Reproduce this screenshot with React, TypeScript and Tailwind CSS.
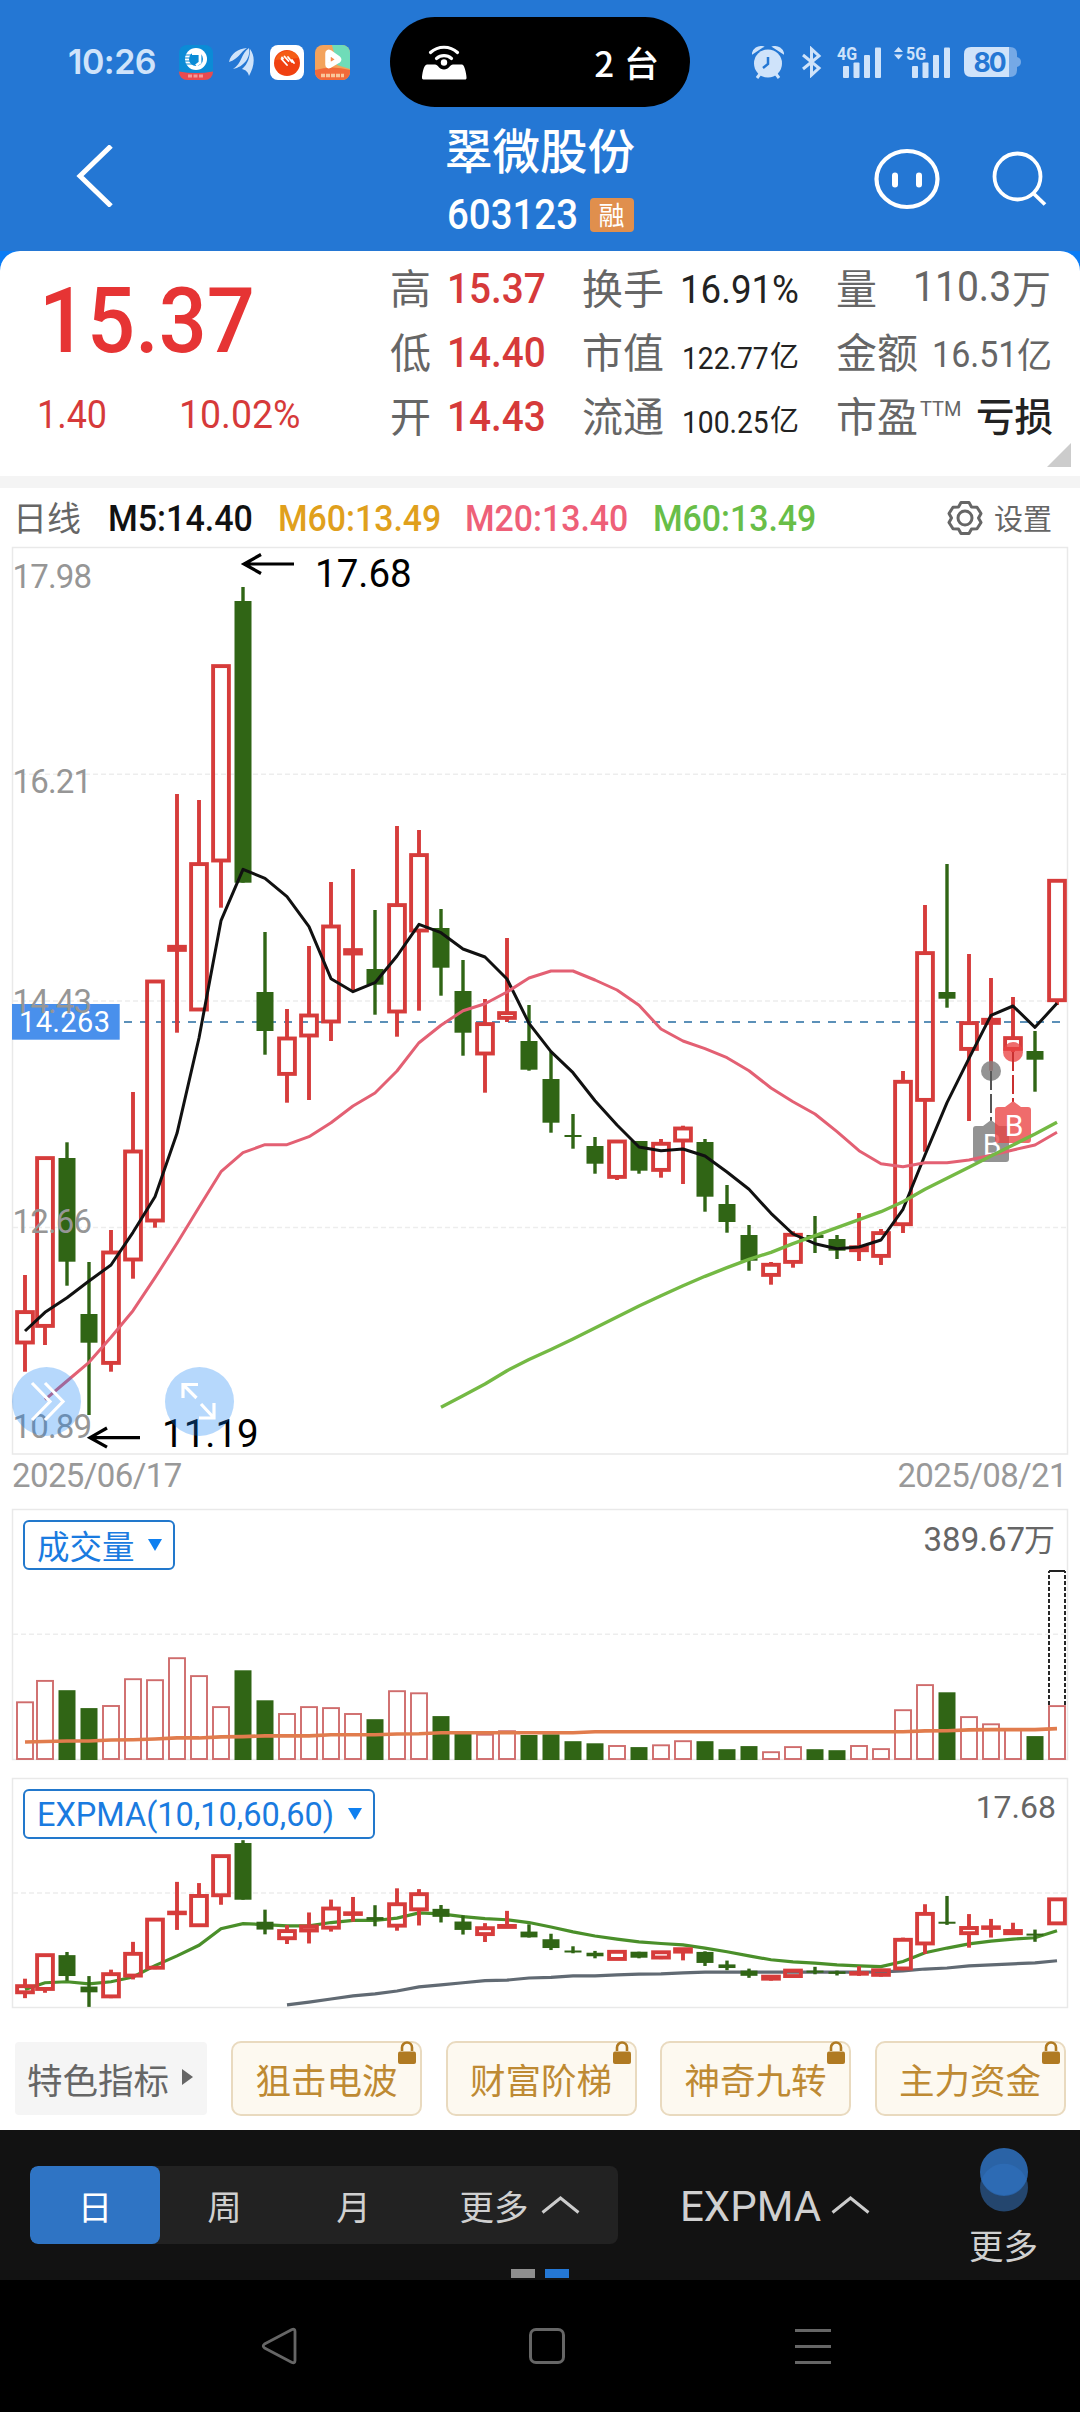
import type { ReactNode } from 'react';
import clsx from 'clsx';

type Candle = {
  up: boolean;
  high: number;
  top: number;
  bottom: number;
  low: number;
  vol: number;
};

// [up, high, body top, body bottom, low, volume height] in chart pixels
const RAW: [number, number, number, number, number, number][] = [
  [1, 1275, 1310.3, 1344.3, 1371.7, 58.2],
  [1, 1158, 1156.3, 1327.7, 1345, 79.6],
  [0, 1142.3, 1158, 1261.7, 1285.7, 69.3],
  [0, 1262, 1314, 1342.7, 1415, 51.4],
  [1, 1230, 1250.7, 1364.7, 1371.7, 54.5],
  [1, 1092, 1149.7, 1261.3, 1278.7, 81.3],
  [1, 981, 979.7, 1222.3, 1227.7, 80.3],
  [1, 794, 945, 951.7, 1032.7, 102.3],
  [1, 800, 862.3, 1011.3, 1010, 84.4],
  [1, 666, 664.3, 862.3, 907.7, 53.4],
  [0, 587, 601, 882.7, 882.7, 89.2],
  [0, 932, 992, 1031, 1054.7, 59.2],
  [1, 1009, 1036.7, 1075.7, 1102.7, 46.5],
  [1, 946, 1013.7, 1037.3, 1100, 53.4],
  [1, 882, 924.7, 1023.3, 1041, 52.4],
  [1, 869, 948.3, 955.3, 991.7, 46.5],
  [0, 910, 969, 984.7, 1014.7, 40.3],
  [1, 826, 903.3, 1013.3, 1036.7, 69.3],
  [1, 830, 853.3, 932.3, 1010.7, 67.2],
  [0, 909, 928, 967.7, 995.7, 43.4],
  [0, 960, 991, 1032.7, 1055.7, 27.9],
  [1, 999, 1022.3, 1055.3, 1092.7, 25.8],
  [1, 938, 1011.3, 1019.7, 1022, 29.3],
  [0, 1005, 1041, 1069.7, 1070.7, 24.5],
  [0, 1051.7, 1079, 1122.7, 1132.7, 25.2],
  [0, 1114, 1135, 1137, 1148.7, 18.3],
  [0, 1137, 1146, 1163.7, 1173.7, 16.2],
  [1, 1141, 1139.7, 1178.7, 1180, 14.5],
  [0, 1141, 1141, 1170.7, 1173.7, 12.4],
  [1, 1139, 1142, 1171.7, 1177.7, 15.2],
  [1, 1125.7, 1126.7, 1142.3, 1184, 19.3],
  [0, 1139, 1142, 1196.7, 1211.7, 18.3],
  [0, 1185, 1204, 1222, 1232.7, 10.3],
  [0, 1225, 1235, 1260.7, 1270.7, 13.4],
  [1, 1262, 1263, 1276.7, 1284.7, 8.3],
  [1, 1231.3, 1233, 1263.7, 1267.7, 13.4],
  [0, 1216, 1235, 1238, 1253, 10.3],
  [0, 1235, 1239, 1250.7, 1259, 9.3],
  [1, 1213, 1245.5, 1252, 1261, 14.5],
  [1, 1229, 1231.3, 1257.7, 1265, 11.4],
  [1, 1071, 1080, 1226, 1233, 50.3],
  [1, 905, 951.3, 1101.7, 1151.7, 75.4],
  [0, 864, 992, 998.7, 1007.7, 67.2],
  [1, 954, 1021.3, 1050.7, 1121, 43.4],
  [1, 978, 1018, 1024.7, 1070.7, 36.2],
  [1, 997, 1036.3, 1050.7, 1052, 30.7],
  [0, 1031, 1051, 1059.7, 1091.7, 23.4],
  [1, 881, 879, 1002, 1005, 54.4],
];

const VOL_BASE = 1759.5;

const CANDLES: Candle[] = RAW.map(([up, high, top, bottom, low, vol]) => ({
  up: up === 1,
  high,
  top,
  bottom,
  low,
  vol: VOL_BASE - vol,
}));

const MA5 = [
  1331, 1312.3, 1297.7, 1281, 1265, 1232.3, 1196.7, 1133.3, 1038, 920.7, 869.3, 878.3, 896.7, 926.7, 978.7, 991.7,
  982.7, 956, 924.3, 932.7, 949, 957, 979, 1023.3, 1051.7, 1072.7, 1100.7, 1125, 1147, 1150.7, 1149, 1156, 1172,
  1189.3, 1213.3, 1234, 1243.7, 1248.7, 1247, 1240, 1209.3, 1155, 1102.7, 1058.3, 1015.3, 1006, 1027.3, 1003.3,
];

const MA20 = [
  1399.7, 1381, 1362.3, 1337.3, 1310.7, 1277.7, 1243.3, 1207.3, 1171.7, 1152.7, 1144.7, 1144.7, 1136.7, 1122.7, 1106,
  1093, 1071, 1042.7, 1025.3, 1010.7, 1003.7, 992, 978, 971, 971, 980, 990, 1005.3, 1029, 1041, 1048.7, 1057.7,
  1070.7, 1088, 1101.7, 1114, 1131.7, 1150.7, 1163.7, 1166.7, 1162.7, 1162.7, 1160, 1155.3, 1150, 1145, 1132.3,
];

const MA60 = [
  1407.3, 1395.7, 1384, 1370.7, 1359.5, 1349.5, 1339, 1328, 1317, 1306, 1295.7, 1285.7, 1276.3, 1267.7, 1259.3,
  1252.3, 1243.7, 1235.7, 1227.7, 1219.7, 1211.7, 1201.7, 1189.3, 1178.3, 1167.3, 1156, 1145, 1134, 1122.3,
];

// indicator lines, measured from y = 1500 before the pane stretch
const VOL_MA = [
  234.3, 233.7, 233.3, 233.3, 232.3, 232, 231.3, 230.3, 230.3, 229.3, 229, 228.3, 228.3, 228.3, 227.3, 227.3, 227.3,
  226.5, 226.3, 225.3, 225.3, 225.3, 225.3, 225.3, 225.3, 225.3, 224.3, 224.3, 224.3, 224.3, 224.3, 224.3, 224.3,
  224.3, 224.3, 224.3, 224.3, 224.3, 224.3, 224.3, 224.3, 223.5, 223.3, 222.5, 222.3, 222.3, 222.3, 221.3,
];

const EMA10 = [
  473.7, 467.3, 466.3, 468.3, 466.3, 461.7, 450.7, 441.3, 431, 415, 410, 411, 412.3, 412.3, 409, 407, 407, 404.7,
  399.7, 400.7, 403.3, 405.3, 406.3, 409, 413.3, 418, 422, 425, 427.7, 429.3, 430.7, 433.7, 437.3, 441.3, 445, 447,
  448.3, 450, 451, 451.7, 446.7, 438.3, 433.7, 429.7, 427, 425, 423.7, 417,
];

const EMA60 = [
  488.7, 486, 483, 480, 478, 475.3, 471.3, 469.3, 467.3, 465.3, 464.7, 462.7, 462, 460.7, 460.7, 459.7, 459, 458.7,
  457.7, 457, 457, 457, 457, 457, 457, 457, 457, 456.7, 455.7, 454, 453, 451, 450, 449, 448, 446,
];

const cx = (i: number) => (i === 0 ? 25 : 23 + 22 * i);

const linePoints = (values: number[], start = 0) => values.map((y, i) => `${cx(i + start)},${y}`).join(' ');

const paneY = (v: number) => 1500 + v * 1.0331;

// the indicator pane repeats the candles on a compressed price scale
const toSub = (y: number) => 1840.2 + (y - 587) * 0.2013;
const same = (y: number) => y;

function Candles({ scale }: { scale: (y: number) => number }) {
  return (
    <g>
      {CANDLES.map((c, i) => {
        const x = cx(i);
        if (!c.up) {
          const h = Math.max(scale(c.bottom) - scale(c.top), 2);
          return (
            <g key={i} fill="#306515">
              <rect x={x - 1.7} y={scale(c.high)} width={3.4} height={scale(c.low) - scale(c.high)} />
              <rect x={x - 8.5} y={scale(c.top)} width={17} height={h} />
            </g>
          );
        }
        const top = scale(c.top + 1.8);
        const bottom = scale(c.bottom - 1.8);
        return (
          <g key={i} stroke="#d63c3b" strokeWidth={3.9} fill="none">
            {c.high < c.top && <line x1={x} x2={x} y1={scale(c.high)} y2={top} />}
            {c.low > c.bottom && <line x1={x} x2={x} y1={bottom} y2={scale(c.low)} />}
            <rect x={x - 7.9} y={top} width={15.8} height={Math.max(bottom - top, 0.5)} />
          </g>
        );
      })}
    </g>
  );
}

function Grid({ y }: { y: number }) {
  return <line x1={13} x2={1067} y1={y} y2={y} stroke="#ededed" strokeWidth={1.5} strokeDasharray="5 3" />;
}

function Marker({ x, y, dotY, color, line }: { x: number; y: number; dotY: number; color: string; line: string }) {
  return (
    <g>
      <circle cx={x} cy={dotY} r={10} fill={color} />
      <line x1={x} x2={x} y1={dotY} y2={y} stroke={line} strokeWidth={2} strokeDasharray="19 4" />
      <path
        d={`M${x} ${y - 1}l8 6h7a3 3 0 0 1 3 3v30a3 3 0 0 1-3 3h-30a3 3 0 0 1-3-3v-30a3 3 0 0 1 3-3h7z`}
        fill={color}
      />
      <text x={x + 1} y={y + 34} textAnchor="middle" fontSize={30} fill="#fff">
        B
      </text>
    </g>
  );
}

const PRICE_LABELS: [string, number][] = [
  ['17.98', 587.7],
  ['16.21', 793],
  ['14.43', 1012.5],
  ['12.66', 1233],
  ['10.89', 1438],
];

function PriceChart() {
  return (
    <div className="relative h-[910px]">
      <svg className="block font-[Roboto,sans-serif]" width={1080} height={910} viewBox="0 546 1080 910">
        <rect x={12.5} y={547.5} width={1055} height={906.5} fill="#fff" stroke="#e9e9e9" strokeWidth={1.5} />
        <Grid y={774.3} />
        <Grid y={1001} />
        <Grid y={1227.5} />
        <line x1={124} x2={1062} y1={1022} y2={1022} stroke="#5b90b8" strokeWidth={2} strokeDasharray="8 8" />
        <Candles scale={same} />
        <polyline points={linePoints(MA5)} fill="none" stroke="#111" strokeWidth={3} strokeLinejoin="round" />
        <Marker x={991} y={1121} dotY={1071} color="rgba(128,128,128,0.85)" line="#555" />
        <Marker x={1013} y={1102} dotY={1052} color="rgba(235,66,66,0.78)" line="#c93030" />
        <g fill="none" strokeLinejoin="round">
          <polyline points={linePoints(MA20, 1)} stroke="#e36073" strokeWidth={3} />
          <polyline points={linePoints(MA60, 19)} stroke="#74b944" strokeWidth={3.4} />
        </g>
        <rect x={12} y={1004} width={107.7} height={35.7} fill="#4990ec" />
        <text x={19} y={1032} fontSize={29} textLength={91} fill="#fff">
          14.263
        </text>
        <g fill="#969696" fontSize={33}>
          {PRICE_LABELS.map(([label, y]) => (
            <text key={label} x={12.5} y={y} textLength={79.5}>
              {label}
            </text>
          ))}
        </g>
        <g stroke="#000" strokeWidth={3.2} fill="none">
          <path d="M294 564H244M261 554.5L244 564l17 9.5" />
          <path d="M140 1437.7H90M107 1428L90 1437.7l17 9.5" />
        </g>
        <g fontSize={38.5} fill="#000">
          <text x={315} y={587}>17.68</text>
          <text x={162} y={1446.7}>11.19</text>
        </g>
      </svg>
      <button className="absolute left-[12px] top-[821px] h-[69px] w-[69px] rounded-full bg-[#0c7df5]/30">
        <svg className="block" width={69} height={69} viewBox="0 0 69 69" fill="none" stroke="#fff" strokeWidth={3.2}>
          <path d="M20 16l18 18.5L20 53M33 16l18 18.5L33 53" />
        </svg>
      </button>
      <button className="absolute left-[165px] top-[821px] h-[69px] w-[69px] rounded-full bg-[#0c7df5]/30">
        <svg className="block" width={69} height={69} viewBox="0 0 69 69" fill="none" stroke="#fff" strokeWidth={3.2}>
          <path d="M18 31V17.500h15M18 17.500l13.500 13.500M49 36v15H34M49 51L36 37" />
        </svg>
      </button>
    </div>
  );
}

function PaneButton({ children, className }: { children: ReactNode; className?: string }) {
  return (
    <button
      className={clsx(
        'absolute left-[23px] flex h-[50px] items-center justify-between rounded-md border-2 border-[#2278cc] bg-white pl-3 pr-[11px] text-[#1a7be0]',
        className,
      )}
    >
      {children}
      <svg width={14} height={12} viewBox="0 0 14 12" fill="#0f80f0" className="-mt-px">
        <path d="M0 0h14L7 12z" />
      </svg>
    </button>
  );
}

function VolumeChart() {
  return (
    <div className="relative h-[268px]">
      <svg className="block" width={1080} height={254} viewBox="0 1508 1080 254">
        <rect x={12.5} y={1509.5} width={1055} height={250} fill="#fff" stroke="#e9e9e9" strokeWidth={1.5} />
        <Grid y={1634.3} />
        {CANDLES.map((c, i) =>
          c.up ? (
            <rect
              key={i}
              x={cx(i) - 8}
              y={c.vol + 1}
              width={16}
              height={VOL_BASE - c.vol - 1.5}
              fill="none"
              stroke="#cf6c6c"
              strokeWidth={1.9}
            />
          ) : (
            <rect key={i} x={cx(i) - 8.5} y={c.vol} width={17} height={VOL_BASE - c.vol + 0.5} fill="#306515" />
          ),
        )}
        <path d="M1049 1705V1571M1065 1705V1571" stroke="#111" strokeWidth={1.8} strokeDasharray="4 2" />
        <path d="M1049 1571H1065" stroke="#222" strokeWidth={2} />
        <polyline points={linePoints(VOL_MA.map(paneY))} fill="none" stroke="#e17c4d" strokeWidth={3.6} />
      </svg>
      <PaneButton className="top-[12px] w-[152px] text-[32.500px]">成交量</PaneButton>
      <span className="absolute right-[25px] top-[10px] flex h-[40px] items-center text-[33px] text-[#666]">
        <span className="pt-1 font-[Roboto,sans-serif]">389.67</span>
        <span className="-ml-px text-[31px]">万</span>
      </span>
    </div>
  );
}

function ExpmaChart() {
  return (
    <div className="relative h-[264px]">
      <svg className="block" width={1080} height={234} viewBox="0 1776 1080 234">
        <rect x={12.5} y={1778.5} width={1055} height={229} fill="#fff" stroke="#e9e9e9" strokeWidth={1.5} />
        <Grid y={1892.9} />
        <polyline points={linePoints(EMA10.map(paneY))} fill="none" stroke="#4a8f2a" strokeWidth={3.2} />
        <polyline points={linePoints(EMA60.map(paneY), 12)} fill="none" stroke="#616a73" strokeWidth={3.2} />
        <Candles scale={toSub} />
      </svg>
      <PaneButton className="top-[13px] w-[352px] font-[Roboto,sans-serif] text-[33px]">
        <span className="-mr-4 inline-block origin-left scale-x-[0.985] whitespace-nowrap pt-[2px]">
          EXPMA(10,10,60,60)
        </span>
      </PaneButton>
      <span className="absolute right-[24px] top-[11px] font-[Roboto,sans-serif] text-[32px] leading-[40px] text-[#666]">
        17.68
      </span>
    </div>
  );
}

function Signal({ label, arrows }: { label: string; arrows?: boolean }) {
  return (
    <svg width={46} height={34} viewBox="0 0 46 34" fill="#cfe3fa" className="font-[Roboto,sans-serif]">
      {arrows && <path d="M-6 7l4.500-5 4.500 5zM-6 9.500l4.500 5 4.500-5z" />}
      <text x={6} y={15} fontSize={17.500} fontWeight={700} textLength={20} lengthAdjust="spacingAndGlyphs">
        {label}
      </text>
      <rect x={12} y={21} width={6} height={12} rx={1} />
      <rect x={22.500} y={17.500} width={6} height={15.500} rx={1} />
      <rect x={33} y={10} width={6} height={23} rx={1} />
      <rect x={44} y={2.500} width={6} height={30.500} rx={1} />
    </svg>
  );
}

function StatusBar() {
  return (
    <div className="flex h-[125px] items-start pt-[17px]">
      <div className="flex h-[90px] w-[390px] items-center pl-[68px]">
        <span className="w-[111px] font-[Inter,sans-serif] text-[34px] font-semibold leading-none tracking-[-0.5px] text-[#cfe3fa]">
          10:26
        </span>
        {/* bank app */}
        <svg width={34} height={35} viewBox="0 0 34 35" className="rounded-lg">
          <rect width={34} height={35} fill="#0b8bd6" />
          <circle cx={17} cy={14} r={11} fill="#fff" />
          <circle cx={17} cy={14} r={7} fill="#0b8bd6" />
          <path d="M6 10h10M5.500 13h10M5.500 16h10M7 19h9" stroke="#0b8bd6" strokeWidth={1} />
          <path d="M13 8.500h8v9l-4 3" fill="none" stroke="#fff" strokeWidth={2.800} />
          <path d="M0 26.500q17 3 34 0V35H0z" fill="#e84a50" />
          <path d="M9 31h16" stroke="#f39a98" strokeWidth={3} strokeDasharray="4 1.500" />
        </svg>
        <svg width={25} height={30} viewBox="0 0 25 30" fill="#cfe3fa" className="ml-4">
          <path d="M0 15C2 6 9 2 18 1 11 5 10 12 0 15z" />
          <path d="M4 22C13 17 12 6 20 1c2 9-5 19-16 21z" />
          <path d="M13 22c6-5 8-12 8-20 6 8 4 18-1 27-1-4-3-6-7-7z" />
        </svg>
        <svg width={34} height={35} viewBox="0 0 34 35" className="ml-[16px]">
          <rect width={34} height={35} rx={8} fill="#fff" />
          <circle cx={17} cy={18} r={13} fill="#f04010" />
          <path d="M5 15a13 13 0 0 1 24-2z" fill="#fa7a1c" opacity={0.5} />
          <path
            d="M12 12.500l1 1M14.500 11.500l4 4.500M11.500 14l5.500 6M18 12l4 5M22 15l2 3"
            stroke="#fff"
            strokeWidth={1.800}
            strokeLinecap="round"
          />
        </svg>
        <svg width={35} height={35} viewBox="0 0 35 35" className="ml-[11px] rounded-lg">
          <rect width={35} height={35} fill="#f3a35c" />
          <path d="M17 0h18v24L22 20z" fill="#6fdcb8" />
          <path d="M0 25q17-5 35 0v10H0z" fill="#f26a3a" />
          <path
            d="M13 8.500v11q0 1.500 1.500 1l8.500-5q1-1 0-2L14.500 7.500q-1.500-.5-1.500 1z"
            fill="#f58b50"
            stroke="#fff"
            strokeWidth={5.500}
            strokeLinejoin="round"
          />
          <path d="M6 30.500h23" stroke="#f9c69a" strokeWidth={3.500} strokeDasharray="4 1" />
        </svg>
      </div>
      <div className="flex h-[90px] w-[300px] items-center justify-between rounded-full bg-black pl-8 pr-[31px] text-white">
        <svg width={45} height={35} viewBox="0 0 45 35" fill="none" stroke="#fff" strokeLinecap="round">
          <path d="M8.500 7.500a20 20 0 0 1 27 0" strokeWidth={3.200} />
          <path d="M14.500 13.500a11.500 11.500 0 0 1 15 0" strokeWidth={3.200} />
          <path
            d="M5 19.500h8c3 0 4 5 9 5s6-5 9-5h9c3 0 5 13 4.500 14-.5 1-1 1-2 1h-40C1 34.500 0 34 0 33c0-3 1.500-13.500 5-13.500z"
            fill="#fff"
            stroke="none"
          />
          <circle cx={22} cy={17.500} r={3.200} fill="#fff" stroke="none" />
        </svg>
        <span className="-mt-[2px] font-['Noto_Sans_CJK_SC',sans-serif] text-[35px] font-medium leading-none [word-spacing:2px]">
          2 台
        </span>
      </div>
      <div className="flex h-[90px] items-center pl-[62px]">
        <svg width={32} height={34} viewBox="0 0 32 34" fill="#cfe3fa">
          <circle cx={16} cy={18.500} r={14} />
          <path d="M1 8a8 8 0 0 1 9-6zM31 8a8 8 0 0 0-9-6z" stroke="#cfe3fa" strokeWidth={2} />
          <path d="M8 29l-3 4M24 29l3 4" stroke="#cfe3fa" strokeWidth={3} />
          <path d="M16 12v7l-5 4" fill="none" stroke="#2477d4" strokeWidth={2.500} />
        </svg>
        <svg width={20} height={32} viewBox="0 0 20 32" fill="none" stroke="#cfe3fa" strokeWidth={3} className="ml-[18px]">
          <path d="M1 9l16 13-7.500 7V3L17 10 1 23" />
        </svg>
        <div className="ml-[9px] flex gap-[23px] [&>svg]:overflow-visible">
          <Signal label="4G" />
          <Signal label="5G" arrows />
        </div>
        <svg width={57} height={30} viewBox="0 0 57 30" className="ml-[18px]">
          <path d="M40 0h6q7 0 7 7v16q0 7-7 7h-6z" fill="#75a9e6" />
          <path d="M53 10q4 1 4 5t-4 5z" fill="#75a9e6" />
          <path d="M7 0h38v30H7q-7 0-7-7V7q0-7 7-7z" fill="#cfe3fa" />
          <text x={9.500} y={25} fontSize={26.500} fontWeight={700} textLength={33} fill="#2477d4" className="font-[Inter,sans-serif]">
            80
          </text>
        </svg>
      </div>
    </div>
  );
}

function Header() {
  return (
    <header className="h-[251px] bg-[#2477d4]">
      <StatusBar />
      <div className="flex h-[126px] text-white">
        <div className="w-[390px] pl-[75px] pt-[20px]">
          <svg width={40} height={62} viewBox="0 0 40 62" fill="none" stroke="#fff" strokeWidth={5}>
            <path d="M36 1L5 31l31 30" />
          </svg>
        </div>
        <div className="flex w-[300px] flex-col items-center">
          <h1 className="-mt-[6px] text-[47.500px] font-medium leading-[60px]">翠微股份</h1>
          <div className="mt-[16px] flex h-[40px] items-center gap-[13px]">
            <span className="w-[130px] font-[Roboto,sans-serif] text-[42px] font-medium leading-none">
              <span className="inline-block origin-left scale-x-[0.915]">603123</span>
            </span>
            <span className="-mt-px flex h-[34px] w-[44px] items-center justify-center rounded-sm bg-[#e08f4d] pb-[2px] text-[26px] leading-none">
              融
            </span>
          </div>
        </div>
        <div className="flex items-start pl-[184px]">
          <svg width={66} height={62} viewBox="0 0 66 62" className="mt-[23px]" fill="none" stroke="#fff">
            <ellipse cx={33} cy={31} rx={30.500} ry={28} strokeWidth={4.200} />
            <path d="M21 27.500v9M45 27.500v9" strokeWidth={6} strokeLinecap="round" />
          </svg>
          <svg width={56} height={58} viewBox="0 0 56 58" className="ml-[52px] mt-[25px]" fill="none" stroke="#fff" strokeWidth={3.800}>
            <circle cx={25.500} cy={26.500} r={23} />
            <path d="M41 43l12 11.500" />
          </svg>
        </div>
      </div>
    </header>
  );
}

function Num({ children, box, className }: { children: ReactNode; box: string; className: string }) {
  return (
    <span className={clsx('inline-block shrink-0 whitespace-nowrap font-[Roboto,sans-serif] leading-none', box)}>
      <span className={clsx('inline-block origin-left', className)}>{children}</span>
    </span>
  );
}

function Quote() {
  return (
    <div className="bg-[#0a7cf5]">
      <section className="relative flex h-[225px] whitespace-nowrap rounded-t-[20px] bg-white">
        <div className="w-[390px]">
          <Num box="ml-[39px] mt-[25px] h-[100px]" className="scale-x-[0.93] text-[91px] font-medium text-[#e63434]">
            15.37
          </Num>
          <div className="mt-[20px] flex">
            <Num box="ml-[37px] w-[142px]" className="scale-x-[0.945] text-[38px] text-[#d63a3a]">
              1.40
            </Num>
            <Num box="" className="scale-x-[0.985] text-[38px] text-[#d63a3a]">
              10.02%
            </Num>
          </div>
        </div>
        <div className="grid w-[192px] grid-rows-3 pb-[29px] pt-[4px] text-[41px] text-[#666]">
          {[
            ['高', '15.37'],
            ['低', '14.40'],
            ['开', '14.43'],
          ].map(([label, value]) => (
            <div key={label} className="flex items-center leading-none">
              <span className="-mt-px w-[57px]">{label}</span>
              <Num box="pt-[2px]" className="scale-x-[0.9] text-[43px] font-medium text-[#d63a3a]">
                {value}
              </Num>
            </div>
          ))}
        </div>
        <div className="grid w-[218px] grid-rows-3 pb-[29px] pt-[4px] text-[41px] leading-none text-[#666]">
          <div className="flex items-center">
            <span className="-mt-px w-[98px]">换手</span>
            <Num box="pt-1" className="scale-x-[0.965] text-[38px] text-[#222]">
              16.91%
            </Num>
          </div>
          <div className="flex items-center">
            <span className="-mt-px w-[100px]">市值</span>
            <Num box="w-[89px] pt-2" className="scale-x-[0.91] text-[31px] text-[#222]">
              122.77
            </Num>
            <span className="-ml-px pt-[6px] text-[29px] text-[#222]">亿</span>
          </div>
          <div className="flex items-center">
            <span className="-mt-px w-[100px]">流通</span>
            <Num box="w-[89px] pt-2" className="scale-x-[0.91] text-[31px] text-[#222]">
              100.25
            </Num>
            <span className="-ml-px pt-[6px] text-[29px] text-[#222]">亿</span>
          </div>
        </div>
        <div className="grid w-[280px] grid-rows-3 pb-[29px] pl-[36px] pt-[4px] text-[41px] leading-none text-[#666]">
          <div className="flex items-center">
            <span className="-mt-px w-[77px]">量</span>
            <Num box="w-[99px]" className="scale-x-[0.93] text-[42px]">
              110.3
            </Num>
            <span className="-mt-px text-[39px]">万</span>
          </div>
          <div className="flex items-center">
            <span className="-mt-px w-[96px]">金额</span>
            <Num box="w-[85px] pt-1" className="scale-x-[0.92] text-[37px]">
              16.51
            </Num>
            <span className="pt-[2px] text-[35px]">亿</span>
          </div>
          <div className="flex items-center">
            <span className="-mt-px">市盈</span>
            <Num box="mb-[26px] ml-[2px] w-[56px]" className="text-[20px]">
              TTM
            </Num>
            <span className="-mt-px text-[38.500px] font-medium text-[#222]">亏损</span>
          </div>
        </div>
        <svg className="absolute bottom-[9px] right-[9px]" width={24} height={24} viewBox="0 0 24 24" fill="#ccc">
          <path d="M24 0v24H0z" />
        </svg>
      </section>
      <div className="h-[12px] bg-[#f4f4f4]" />
    </div>
  );
}

function AverageBar() {
  return (
    <div className="flex h-[58px] items-center bg-white pt-[2px] text-[#666]">
      <span className="-mt-[4px] ml-[13px] w-[95px] text-[34px]">日线</span>
      <Num box="w-[170px] pt-px" className="scale-x-[0.945] text-[36px] font-medium text-[#111]">
        M5:14.40
      </Num>
      <Num box="w-[187px] pt-px" className="scale-x-[0.94] text-[36px] font-medium text-[#e0a01c]">
        M60:13.49
      </Num>
      <Num box="w-[188px] pt-px" className="scale-x-[0.94] text-[36px] font-medium text-[#ee6078]">
        M20:13.40
      </Num>
      <Num box="w-[294px] pt-px" className="scale-x-[0.94] text-[36px] font-medium text-[#68be48]">
        M60:13.49
      </Num>
      <svg width={36} height={36} viewBox="0 0 36 36" fill="none" stroke="#666" strokeWidth={3} strokeLinejoin="round">
        <path d="M14 2.500h8l2.500 4.500 5.500.2 4 6.300-2.500 4.500 2.500 4.500-4 6.300-5.500.2L22 33.500h-8l-2.500-4.500-5.500-.2-4-6.300L4.500 18 2 13.500l4-6.300 5.500-.2z" />
        <circle cx={18} cy={18} r={7} />
      </svg>
      <span className="ml-[11px] text-[29px]">设置</span>
    </div>
  );
}

function FeatureRow() {
  return (
    <div className="flex h-[90px] items-start bg-white pl-[15px] pt-px text-[35.500px] leading-none">
      <button className="mt-px flex h-[73px] w-[192px] items-center rounded bg-[#f5f5f5] pl-[12px] text-[#666]">
        特色指标
        <svg width={11} height={16} viewBox="0 0 11 16" fill="#666" className="-mt-[3px] ml-[13px]">
          <path d="M0 0l11 8-11 8z" />
        </svg>
      </button>
      <div className="ml-[24px] flex gap-[23.500px]">
        {['狙击电波', '财富阶梯', '神奇九转', '主力资金'].map((name) => (
          <button
            key={name}
            className="relative flex h-[75px] w-[191px] items-center justify-center rounded-[10px] border-2 border-[#e9dabf] bg-[#fdf9f0] text-[#be8a33]"
          >
            {name}
            <svg className="absolute right-[4px] -top-[2px]" width={18} height={23} viewBox="0 0 18 23">
              <rect y={10.500} width={18} height={12.500} rx={2} fill="#b07a22" />
              <path d="M4 10V6.500a5 5 0 0 1 10 0V10" fill="none" stroke="#b07a22" strokeWidth={2.600} />
            </svg>
          </button>
        ))}
      </div>
    </div>
  );
}

function Caret() {
  return (
    <svg width={39} height={18} viewBox="0 0 39 18" fill="none" stroke="#ccc" strokeWidth={3}>
      <path d="M1.500 16.500l18-14.500 18 14.500" />
    </svg>
  );
}

function PeriodBar() {
  return (
    <div className="flex h-[150px] flex-col bg-[#121212] text-[34.500px] leading-none text-[#d0d0d0]">
      <div className="flex h-[139px]">
        <div className="ml-[30px] mt-[36px] flex h-[78px] w-[588px] overflow-hidden rounded-lg bg-[#222] [&>*]:flex [&>*]:items-center [&>*]:justify-center">
          <button className="w-[130px] rounded-lg bg-[#2f74c4] text-white">日</button>
          <button className="w-[129px]">周</button>
          <button className="w-[129px]">月</button>
          <button className="w-[200px] gap-[12px] pl-[3px]">
            更多
            <Caret />
          </button>
        </div>
        <button className="ml-[62px] mt-[38px] flex h-[78px] w-[300px] items-center gap-[10px] font-[Roboto,sans-serif]">
          <span className="text-[42px]">EXPMA</span>
          <span className="-mt-[5px]">
            <Caret />
          </span>
        </button>
        <button className="-ml-[11px] flex flex-col items-center pt-[18px]">
          <svg width={48} height={64} viewBox="0 0 48 64">
            <circle cx={24} cy={39.500} r={24} fill="#24466e" />
            <circle cx={24} cy={24} r={24} fill="#2a63a6" />
            <path d="M1.500 31.500a24 24 0 0 1 45 0 24 24 0 0 1-45 0z" fill="#2d6bb4" />
          </svg>
          <span className="mt-[15px]">更多</span>
        </button>
      </div>
      <div className="flex justify-center gap-[10px]">
        <span className="h-[9px] w-[24px] bg-[#8f8f8f]" />
        <span className="h-[9px] w-[24px] bg-[#2477d4]" />
      </div>
    </div>
  );
}

function SystemNav() {
  return (
    <div className="flex h-[132px] items-center bg-black pl-[261px]">
      <svg width={36} height={38} viewBox="0 0 36 38" fill="none" stroke="#666" strokeWidth={2.800} strokeLinejoin="round">
        <path d="M31 2.500L3.500 17q-2.500 2 0 4L31 35.500q3 1 3-2v-29q0-3-3-2z" />
      </svg>
      <span className="ml-[232px] h-[36px] w-[36px] rounded-[7px] border-[3px] border-[#666]" />
      <div className="ml-[230px] flex w-[36px] flex-col gap-[13px]">
        <span className="h-[3px] bg-[#666]" />
        <span className="h-[3px] bg-[#666]" />
        <span className="h-[3px] bg-[#666]" />
      </div>
    </div>
  );
}

export default function App() {
  return (
    <div className="h-[2412px] w-[1080px] overflow-hidden bg-white font-['Noto_Sans_CJK_SC',sans-serif]">
      <Header />
      <Quote />
      <AverageBar />
      <PriceChart />
      <div className="flex h-[52px] justify-between pl-[12px] pr-[13px] font-[Roboto,sans-serif] text-[33px] leading-[39px] tracking-[-0.6px] text-[#999]">
        <span>2025/06/17</span>
        <span>2025/08/21</span>
      </div>
      <VolumeChart />
      <ExpmaChart />
      <FeatureRow />
      <PeriodBar />
      <SystemNav />
    </div>
  );
}
